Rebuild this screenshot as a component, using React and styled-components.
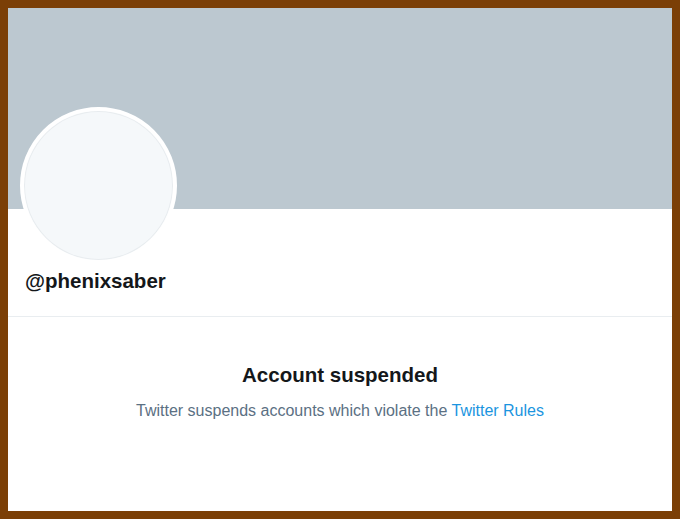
import React from "react";
import styled, { createGlobalStyle } from "styled-components";

const Global = createGlobalStyle`
  html, body { margin: 0; padding: 0; background: #7b3f06; }
  * { box-sizing: border-box; }
`;

const Frame = styled.div`
  width: 680px;
  height: 519px;
  border: 8px solid #7b3f06;
  background: #ffffff;
  display: flex;
  flex-direction: column;
  font-family: "Liberation Sans", Arial, sans-serif;
  overflow: hidden;
`;

const Banner = styled.div`
  height: 201px;
  flex-shrink: 0;
  background: #bcc8d0;
`;

const ProfileHeader = styled.div`
  padding: 0 12px 23px 12px;
  border-bottom: 1px solid #e9edf0;
`;

const Avatar = styled.div`
  width: 157px;
  height: 157px;
  margin-top: -102px;
  border-radius: 50%;
  border: 4px solid #ffffff;
  background: #f5f8fa;
  box-shadow: inset 0 0 0 1px #e8ecef;
  position: relative;
`;

const Username = styled.div`
  margin: 5px 0 0 5px;
  font-size: 20.5px;
  line-height: 24px;
  font-weight: 700;
  color: #14171a;
`;

const Message = styled.div`
  display: flex;
  flex-direction: column;
  align-items: center;
  padding-top: 46px;
  gap: 14px;
`;

const Title = styled.div`
  font-size: 20.5px;
  line-height: 24px;
  font-weight: 700;
  color: #14171a;
`;

const Body = styled.div`
  font-size: 16px;
  line-height: 20px;
  color: #5b7083;
`;

const Link = styled.a`
  color: #1b95e0;
  text-decoration: none;
`;

export default function App() {
  return (
    <>
      <Global />
      <Frame>
        <Banner />
        <ProfileHeader>
          <Avatar />
          <Username>@phenixsaber</Username>
        </ProfileHeader>
        <Message>
          <Title>Account suspended</Title>
          <Body>
            Twitter suspends accounts which violate the <Link href="#">Twitter Rules</Link>
          </Body>
        </Message>
      </Frame>
    </>
  );
}
